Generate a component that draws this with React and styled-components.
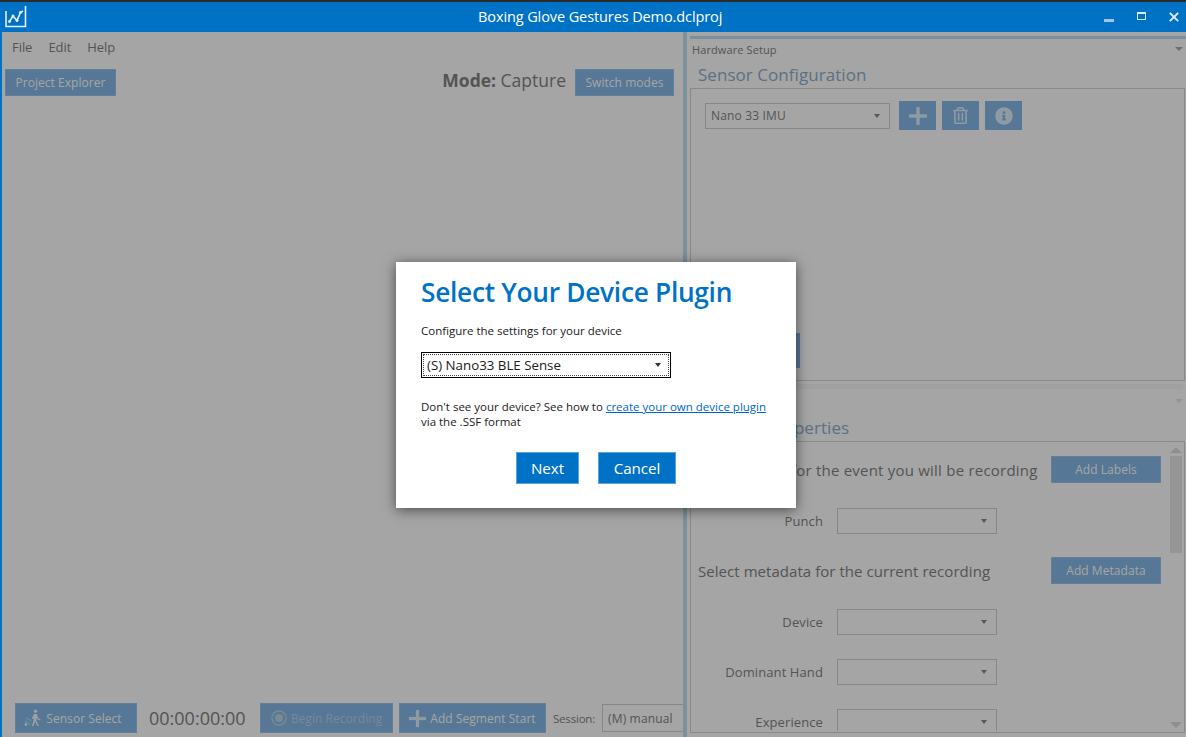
import React from 'react'
import styled, { createGlobalStyle } from 'styled-components'
import { FaRegTrashAlt, FaInfoCircle } from 'react-icons/fa'

const FONT = '"Open Sans", "Noto Sans", sans-serif'
const BUTTON_BLUE = '#85b9e6'
const MUTED = '#838383'

const GlobalStyle = createGlobalStyle`
  html, body {
    margin: 0;
    height: 100%;
    overflow: hidden;
    background: #2b2b2b;
  }
  * {
    box-sizing: border-box;
  }
`

const Window = styled.div`
  width: 1186px;
  height: 737px;
  padding-top: 2px;
  display: flex;
  flex-direction: column;
  font-family: ${FONT};
  overflow: hidden;
`

const TitleBar = styled.header`
  height: 30px;
  flex: none;
  background: #0072c6;
  display: flex;
  align-items: center;
  justify-content: space-between;
  padding: 0 0 0 5px;
  position: relative;
`

const WindowTitle = styled.div`
  position: absolute;
  left: 478px;
  top: 5px;
  color: #fff;
  font-size: 14.5px;
  letter-spacing: -0.1px;
  line-height: 20px;
`

const WindowButtons = styled.div`
  display: flex;
  align-items: center;
  gap: 23px;
  padding-right: 7px;
  color: #dcebf7;
`

const Content = styled.div`
  flex: 1;
  min-height: 0;
  position: relative;
  display: flex;
  background: #fff;
  border-left: 2px solid #0072c6;
`

const LeftPane = styled.section`
  width: 681px;
  flex: none;
  display: flex;
  flex-direction: column;
`

const MenuBar = styled.nav`
  height: 30px;
  display: flex;
  align-items: center;
  gap: 16px;
  padding: 0 0 0 10px;
  flex: none;
  font-size: 13px;
  letter-spacing: -0.05px;
  color: ${MUTED};
`

const Toolbar = styled.div`
  display: flex;
  align-items: center;
  justify-content: space-between;
  padding: 6px 9px 0 3px;
  flex: none;
`

const ModeGroup = styled.div`
  display: flex;
  align-items: center;
  gap: 9px;
`

const ModeText = styled.div`
  font-size: 17.5px;
  padding-bottom: 4px;
  color: ${MUTED};
  strong {
    font-weight: 700;
  }
`

const BlueButton = styled.button`
  width: ${p => p.$w}px;
  height: ${p => p.$h || 27}px;
  flex: none;
  border: 1px solid #97c4eb;
  background: ${BUTTON_BLUE};
  font-family: ${FONT};
  font-size: 12px;
  letter-spacing: 0.05px;
  padding: 0;
  display: flex;
  align-items: center;
  justify-content: center;
  gap: 4px;
  color: ${p => (p.$faded ? '#bed2e8' : '#fff')};
`

const SensorButton = styled(BlueButton)`
  padding-right: 6px;
`

const SegmentButton = styled(BlueButton)`
  margin-left: 6px;
`

const Spacer = styled.div`
  flex: 1;
`

const BottomBar = styled.div`
  height: 34px;
  flex: none;
  padding: 0 0 4px 13px;
  display: flex;
  align-items: center;
  overflow: hidden;
`

const Timer = styled.div`
  font-size: 18px;
  color: ${MUTED};
  width: 123px;
  padding-left: 12px;
  padding-bottom: 1px;
  flex: none;
`

const SessionLabel = styled.span`
  font-size: 11.5px;
  letter-spacing: -0.2px;
  color: ${MUTED};
  margin: 0 7px 0 7px;
  flex: none;
`

const SelectBox = styled.div`
  width: ${p => p.$w}px;
  height: ${p => p.$h || 26}px;
  flex: none;
  border: 1px solid #d0d0d0;
  display: flex;
  align-items: center;
  justify-content: space-between;
  padding: 0 9px 0 5px;
  font-size: 12px;
  letter-spacing: 0.15px;
  color: ${MUTED};
  background: #fff;
`

const Caret = styled.i`
  width: 0;
  height: 0;
  border-left: 3.5px solid transparent;
  border-right: 3.5px solid transparent;
  border-top: 4px solid ${p => p.$color || '#888'};
`

const Splitter = styled.div`
  width: 4px;
  flex: none;
  background: #bfe0f0;
`

const RightPane = styled.section`
  flex: 1;
  min-width: 0;
  display: flex;
  flex-direction: column;
  padding-left: 3px;
`

const TopRule = styled.div`
  height: 3px;
  margin-top: 4px;
  flex: none;
  background: #c0dfee;
`

const PaneHeader = styled.div`
  height: ${p => p.$h}px;
  flex: none;
  display: flex;
  align-items: center;
  justify-content: space-between;
  padding: 0 3px 0 2px;
  font-size: 11px;
  letter-spacing: 0.1px;
  color: ${MUTED};
`

const HeaderCaret = styled.i`
  width: 0;
  height: 0;
  border-left: 4px solid transparent;
  border-right: 4px solid transparent;
  border-top: 4px solid ${p => p.$color || '#aaa'};
`

const SectionTitle = styled.h2`
  margin: 0;
  height: 29px;
  flex: none;
  padding: 4px 0 0 8px;
  font-size: 17px;
  font-weight: 400;
  line-height: 24px;
  letter-spacing: 0.05px;
  color: #8eaecb;
`

const ConfigPanel = styled.div`
  height: 293px;
  flex: none;
  margin-right: 1px;
  border: 1px solid #d4d4d4;
  display: flex;
  flex-direction: column;
  padding: 12px 0 0 14px;
  position: relative;
`

const ConfigRow = styled.div`
  display: flex;
  align-items: center;
  gap: 6px;
`

const IconButton = styled(BlueButton)`
  width: 37px;
  height: 29px;
  border: none;
  color: #dfeefa;
`

const AddSensorButton = styled(IconButton)`
  margin-left: 3px;
`

const SavedButton = styled.div`
  width: 95px;
  height: 35px;
  background: ${BUTTON_BLUE};
  margin-top: 203px;
`

const Divider = styled.div`
  height: 5px;
  margin: 3px 3px 0 0;
  flex: none;
  background: #f7f7f7;
`

const PropsPanel = styled.div`
  flex: 1;
  min-height: 0;
  margin-right: 1px;
  margin-bottom: 4px;
  border: 1px solid #d4d4d4;
  position: relative;
`

const PropsScroller = styled.div`
  height: 289px;
  padding: 14px 0 0 7px;
  overflow: hidden;
`

const PromptRow = styled.div`
  width: 463px;
  height: 27px;
  display: flex;
  align-items: center;
  justify-content: space-between;
  font-size: 15px;
  letter-spacing: ${p => p.$track}px;
  color: ${MUTED};
  margin-bottom: ${p => p.$after}px;
`

const FieldRow = styled.div`
  display: flex;
  align-items: center;
  height: 26px;
  margin-bottom: ${p => p.$after}px;
`

const FieldLabel = styled.label`
  width: 125px;
  text-align: right;
  font-size: 13px;
  letter-spacing: 0.1px;
  color: ${MUTED};
  margin-right: 14px;
  flex: none;
`

const Scrollbar = styled.div`
  position: absolute;
  right: 2px;
  top: 5px;
  bottom: 0;
  width: 12px;
  display: flex;
  flex-direction: column;
  align-items: center;
`

const ScrollUp = styled.i`
  width: 0;
  height: 0;
  border-left: 6px solid transparent;
  border-right: 6px solid transparent;
  border-bottom: 6px solid #ddd;
`

const ScrollThumb = styled.div`
  width: 12px;
  height: 97px;
  margin-top: 3px;
  background: #e6e6e6;
`

const ScrollDown = styled.i`
  width: 0;
  height: 0;
  margin-top: auto;
  margin-bottom: 4px;
  border-left: 6px solid transparent;
  border-right: 6px solid transparent;
  border-top: 6px solid #ddd;
`

const Scrim = styled.div`
  position: absolute;
  inset: 0;
  background: rgba(0, 0, 0, 0.353);
  display: flex;
  align-items: center;
  justify-content: center;
  padding: 1px 0 0 4px;
`

const Dialog = styled.div`
  width: 400px;
  height: 246px;
  background: #fff;
  padding: 12px 25px 0;
  box-shadow: 0 2px 12px rgba(0, 0, 0, 0.55);
  display: flex;
  flex-direction: column;
`

const DialogTitle = styled.h1`
  margin: 0;
  font-size: 26.3px;
  line-height: 36px;
  font-weight: 600;
  letter-spacing: -0.3px;
  color: #0072c6;
`

const DialogText = styled.p`
  margin: ${p => p.$top}px 0 0;
  font-size: 11.5px;
  line-height: 15px;
  color: #1a1a1a;
`

const DialogLink = styled.a`
  color: #0066cc;
  text-decoration: underline;
`

const DeviceSelect = styled.div`
  width: 250px;
  height: 26px;
  margin-top: 14px;
  border: 1px solid #000;
  box-shadow: inset 0 0 0 1px #fff;
  outline: 1px dotted #444;
  outline-offset: -3px;
  display: flex;
  align-items: center;
  justify-content: space-between;
  padding: 0 9px 0 5px;
  font-size: 13.3px;
  color: #1a1a1a;
`

const DialogActions = styled.div`
  display: flex;
  gap: 19px;
  margin-top: 23px;
  padding-left: 95px;
`

const DialogButton = styled.button`
  width: ${p => p.$w}px;
  height: 32px;
  background: #0072c6;
  border: 1px solid #5aa5e0;
  color: #fff;
  font-family: ${FONT};
  font-size: 15.2px;
  letter-spacing: -0.1px;
  padding: 0;
`

const ChartLogo = () => (
  <svg width="22" height="22" viewBox="0 0 22 22" fill="none" stroke="#e4f1fb">
    <path d="M1 5V20.5H20.5V0" strokeWidth="1.6" />
    <path d="M4.5 15.5L8 10L12 14.5L15.5 6.5L18 5" strokeWidth="1.6" />
    <circle cx="4.5" cy="15.5" r="1.1" fill="#e4f1fb" />
    <circle cx="8" cy="10" r="1.1" fill="#e4f1fb" />
    <circle cx="12" cy="14.5" r="1.1" fill="#e4f1fb" />
    <circle cx="15.5" cy="6.5" r="1.1" fill="#e4f1fb" />
  </svg>
)

const MinimizeIcon = () => (
  <svg width="10" height="12" viewBox="0 0 10 12">
    <rect x="0" y="8" width="10" height="3" fill="#9cc8ea" />
  </svg>
)

const MaximizeIcon = () => (
  <svg width="9" height="12" viewBox="0 0 9 12" fill="none" stroke="#dcebf7">
    <rect x="0.5" y="1.5" width="8" height="7" />
    <path d="M0 2H9" strokeWidth="2" />
  </svg>
)

const CloseIcon = () => (
  <svg width="10" height="10" viewBox="0 0 12 12" stroke="#dcebf7" strokeWidth="2.4">
    <path d="M1 1L11 11M11 1L1 11" />
  </svg>
)

const PlusIcon = ({ size = 17, weight = 3 }) => (
  <svg width={size} height={size} viewBox="0 0 16 16" fill="#dfeefa">
    <rect x={8 - weight / 2} y="0" width={weight} height="16" />
    <rect x="0" y={8 - weight / 2} width="16" height={weight} />
  </svg>
)

const SensorIcon = () => (
  <svg width="18" height="18" viewBox="0 0 18 18" fill="#f2f8fd">
    <circle cx="11.5" cy="2.2" r="1.7" />
    <path d="M10 5L13 5L14 9L16.5 10.5L16 11.5L13 10L12.5 9L12.3 11.5L15 17H13.5L11 12.5L9.5 17H8L10 9.5L8.8 10.5L8 9Z" />
    <circle cx="2" cy="15.5" r="1.4" />
    <path d="M1 12.5A5 5 0 0 1 6 16.5" fill="none" stroke="#f2f8fd" strokeDasharray="1.4 1" />
    <path d="M2 9.5A8 8 0 0 1 8 13" fill="none" stroke="#f2f8fd" strokeDasharray="1.4 1" />
  </svg>
)

const RecordIcon = () => (
  <svg width="16" height="16" viewBox="0 0 16 16">
    <circle cx="8" cy="8" r="7" fill="none" stroke="#bed2e8" strokeWidth="1.4" />
    <circle cx="8" cy="8" r="4" fill="#bed2e8" />
  </svg>
)

export default function App() {
  return (
    <Window>
      <GlobalStyle />
      <TitleBar>
        <ChartLogo />
        <WindowTitle>Boxing Glove Gestures Demo.dclproj</WindowTitle>
        <WindowButtons>
          <MinimizeIcon />
          <MaximizeIcon />
          <CloseIcon />
        </WindowButtons>
      </TitleBar>
      <Content>
        <LeftPane>
          <MenuBar>
            <span>File</span>
            <span>Edit</span>
            <span>Help</span>
          </MenuBar>
          <Toolbar>
            <BlueButton $w={111}>Project Explorer</BlueButton>
            <ModeGroup>
              <ModeText><strong>Mode:</strong> Capture</ModeText>
              <BlueButton $w={99}>Switch modes</BlueButton>
            </ModeGroup>
          </Toolbar>
          <Spacer />
          <BottomBar>
            <SensorButton $w={122} $h={30}><SensorIcon />Sensor Select</SensorButton>
            <Timer>00:00:00:00</Timer>
            <BlueButton $w={133} $h={30} $faded><RecordIcon />Begin Recording</BlueButton>
            <SegmentButton $w={147} $h={30}><PlusIcon />Add Segment Start</SegmentButton>
            <SessionLabel>Session:</SessionLabel>
            <SelectBox $w={100} $h={28}>(M) manual</SelectBox>
          </BottomBar>
        </LeftPane>
        <Splitter />
        <RightPane>
          <TopRule />
          <PaneHeader $h={20}>Hardware Setup<HeaderCaret /></PaneHeader>
          <SectionTitle>Sensor Configuration</SectionTitle>
          <ConfigPanel>
            <ConfigRow>
              <SelectBox $w={185}>Nano 33 IMU<Caret /></SelectBox>
              <AddSensorButton><PlusIcon size={18} /></AddSensorButton>
              <IconButton><FaRegTrashAlt size={17} /></IconButton>
              <IconButton><FaInfoCircle size={18} /></IconButton>
            </ConfigRow>
            <SavedButton />
          </ConfigPanel>
          <Divider />
          <PaneHeader $h={23}><span /><HeaderCaret $color="#e4e4e4" /></PaneHeader>
          <SectionTitle>Capture Properties</SectionTitle>
          <PropsPanel>
            <PropsScroller>
              <PromptRow $after={25} $track={0.22}>
                Select labels for the event you will be recording
                <BlueButton $w={110}>Add Labels</BlueButton>
              </PromptRow>
              <FieldRow $after={23}>
                <FieldLabel>Punch</FieldLabel>
                <SelectBox $w={160}><span /><Caret /></SelectBox>
              </FieldRow>
              <PromptRow $after={25} $track={0.05}>
                Select metadata for the current recording
                <BlueButton $w={110}>Add Metadata</BlueButton>
              </PromptRow>
              <FieldRow $after={24}>
                <FieldLabel>Device</FieldLabel>
                <SelectBox $w={160}><span /><Caret /></SelectBox>
              </FieldRow>
              <FieldRow $after={24}>
                <FieldLabel>Dominant Hand</FieldLabel>
                <SelectBox $w={160}><span /><Caret /></SelectBox>
              </FieldRow>
              <FieldRow $after={0}>
                <FieldLabel>Experience</FieldLabel>
                <SelectBox $w={160}><span /><Caret /></SelectBox>
              </FieldRow>
            </PropsScroller>
            <Scrollbar>
              <ScrollUp />
              <ScrollThumb />
              <ScrollDown />
            </Scrollbar>
          </PropsPanel>
        </RightPane>
        <Scrim>
          <Dialog>
            <DialogTitle>Select Your Device Plugin</DialogTitle>
            <DialogText $top={13}>Configure the settings for your device</DialogText>
            <DeviceSelect>(S) Nano33 BLE Sense<Caret $color="#333" /></DeviceSelect>
            <DialogText $top={21}>
              Don't see your device? See how to <DialogLink href="#">create your own device plugin</DialogLink>
              <br />via the .SSF format
            </DialogText>
            <DialogActions>
              <DialogButton $w={63}>Next</DialogButton>
              <DialogButton $w={78}>Cancel</DialogButton>
            </DialogActions>
          </Dialog>
        </Scrim>
      </Content>
    </Window>
  )
}
